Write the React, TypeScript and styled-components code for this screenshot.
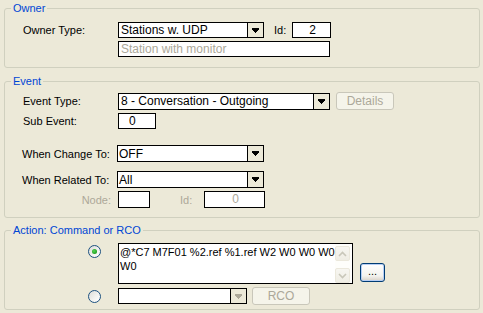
import styled, { createGlobalStyle } from 'styled-components';

const GlobalStyle = createGlobalStyle`
  html, body {
    margin: 0;
    padding: 0;
    background: #ece9d8;
  }
  body {
    font-family: "Liberation Sans", Arial, sans-serif;
    font-size: 11px;
    color: #000000;
  }
`;

function ArrowGlyph({ color }: { color: string }) {
  return (
    <svg width="7" height="5" viewBox="0 0 7 5" shapeRendering="crispEdges">
      <rect x="0" y="0" width="7" height="1" fill={color} />
      <rect x="0" y="1" width="7" height="1" fill={color} />
      <rect x="1" y="2" width="5" height="1" fill={color} />
      <rect x="2" y="3" width="3" height="1" fill={color} />
      <rect x="3" y="4" width="1" height="1" fill={color} />
    </svg>
  );
}

function Chevron({ up }: { up?: boolean }) {
  return (
    <svg width="9" height="6" viewBox="0 0 9 6">
      <polyline
        points={up ? '1,5 4.5,1.5 8,5' : '1,1 4.5,4.5 8,1'}
        fill="none"
        stroke="#c9c7ba"
        strokeWidth="1.6"
      />
    </svg>
  );
}

function Combo({
  value,
  width,
  height = 17,
  disabled,
  pad = 2,
}: {
  value: string;
  width: number;
  height?: number;
  disabled?: boolean;
  pad?: number;
}) {
  return (
    <ComboBox $width={width} $height={height}>
      <ComboText $pad={pad}>{value}</ComboText>
      <ComboArrow>
        <ArrowGlyph color={disabled ? '#aca899' : '#000000'} />
      </ComboArrow>
    </ComboBox>
  );
}

export default function App() {
  return (
    <>
      <GlobalStyle />
      <Page>
        <Group $top={0} $padTop={7} $padBottom={10}>
          <Legend>Owner</Legend>
          <Row>
            <Label>Owner Type:</Label>
            <Combo value="Stations w. UDP" width={146} height={16} />
            <SmallLabel $left={10} $width={18}>
              Id:
            </SmallLabel>
            <Edit $width={39} $align="center">
              2
            </Edit>
          </Row>
          <Row $top={3}>
            <Label />
            <Edit $width={212} $muted>
              Station with monitor
            </Edit>
          </Row>
        </Group>

        <Group $top={7} $padTop={4} $padBottom={9}>
          <Legend>Event</Legend>
          <Row>
            <Label>Event Type:</Label>
            <Combo value="8 - Conversation - Outgoing" width={212} />
            <FlatButton $left={6} $width={58}>
              Details
            </FlatButton>
          </Row>
          <Row $top={3}>
            <Label>Sub Event:</Label>
            <Edit $width={38} $indent={10}>
              0
            </Edit>
          </Row>
          <Row $top={16}>
            <Label $shift={-1}>When Change To:</Label>
            <Combo value="OFF" width={147} pad={1} />
          </Row>
          <Row $top={9}>
            <Label $shift={-1}>When Related To:</Label>
            <Combo value="All" width={147} pad={1} />
          </Row>
          <Row $top={3}>
            <Label $muted $right>
              Node:
            </Label>
            <Edit $width={32} $height={17} />
            <SmallLabel $left={30} $width={24} $muted>
              Id:
            </SmallLabel>
            <Edit $width={61} $height={17} $align="center" $muted>
              0
            </Edit>
          </Row>
        </Group>

        <Group $top={6} $padTop={6} $padBottom={4}>
          <Legend>Action: Command or RCO</Legend>
          <ActionRow>
            <Radio $checked />
            <TextArea>
              <TextLines>
                <div>@*C7 M7F01 %2.ref %1.ref W2 W0 W0 W0</div>
                <div>W0</div>
              </TextLines>
              <ScrollBar>
                <ScrollButton>
                  <Chevron up />
                </ScrollButton>
                <ScrollButton>
                  <Chevron />
                </ScrollButton>
              </ScrollBar>
            </TextArea>
            <DotsButton>...</DotsButton>
          </ActionRow>
          <ActionRow $top={3} $center>
            <Radio />
            <Combo value="" width={129} height={16} disabled />
            <FlatButton $left={5} $width={58}>
              RCO
            </FlatButton>
          </ActionRow>
        </Group>
      </Page>
    </>
  );
}

const Page = styled.div`
  width: 483px;
  height: 313px;
  box-sizing: border-box;
  padding: 2px 3px 0 4px;
  overflow: hidden;
`;

const Group = styled.fieldset<{ $top: number; $padTop: number; $padBottom: number }>`
  margin: ${(p) => p.$top}px 0 0 0;
  padding: ${(p) => p.$padTop}px 0 ${(p) => p.$padBottom}px 0;
  width: 476px;
  box-sizing: border-box;
  border: 1px solid #d0d0bf;
  border-radius: 3px;
  min-inline-size: 0;
`;

const Legend = styled.legend`
  margin-left: 6px;
  padding: 0 2px;
  color: #0046d5;
  font-size: 11px;
  line-height: 13px;
`;

const Row = styled.div<{ $top?: number }>`
  display: flex;
  align-items: center;
  margin-top: ${(p) => p.$top ?? 0}px;
  padding-left: 18px;
`;

const ActionRow = styled.div<{ $top?: number; $center?: boolean }>`
  display: flex;
  align-items: ${(p) => (p.$center ? 'center' : 'flex-start')};
  margin-top: ${(p) => p.$top ?? 0}px;
  padding-left: 83px;
`;

const Label = styled.div<{ $muted?: boolean; $right?: boolean; $shift?: number }>`
  width: 95px;
  flex-shrink: 0;
  box-sizing: border-box;
  margin-left: ${(p) => p.$shift ?? 0}px;
  padding-right: ${(p) => (p.$right ? 7 : 0)}px;
  text-align: ${(p) => (p.$right ? 'right' : 'left')};
  color: ${(p) => (p.$muted ? '#aca899' : '#000000')};
  white-space: nowrap;
`;

const SmallLabel = styled.div<{ $left: number; $width: number; $muted?: boolean }>`
  margin-left: ${(p) => p.$left}px;
  width: ${(p) => p.$width}px;
  color: ${(p) => (p.$muted ? '#aca899' : '#000000')};
`;

const ComboBox = styled.div<{ $width: number; $height: number }>`
  display: flex;
  width: ${(p) => p.$width}px;
  height: ${(p) => p.$height}px;
  box-sizing: border-box;
  border: 1px solid #000000;
  background: #ffffff;
`;

const ComboText = styled.div<{ $pad: number }>`
  flex: 1;
  padding-left: ${(p) => p.$pad}px;
  display: flex;
  align-items: center;
  white-space: nowrap;
  overflow: hidden;
  font-size: 12px;
`;

const ComboArrow = styled.div`
  width: 15px;
  border-left: 1px solid #000000;
  background: #ece9d8;
  display: flex;
  align-items: center;
  justify-content: center;
`;

const Edit = styled.div<{
  $width: number;
  $height?: number;
  $align?: string;
  $muted?: boolean;
  $indent?: number;
}>`
  width: ${(p) => p.$width}px;
  height: ${(p) => p.$height ?? 16}px;
  box-sizing: border-box;
  border: 1px solid #000000;
  background: #ffffff;
  padding-left: ${(p) => p.$indent ?? 2}px;
  text-align: ${(p) => p.$align ?? 'left'};
  line-height: 14px;
  font-size: 12px;
  color: ${(p) => (p.$muted ? '#aca899' : '#000000')};
  white-space: nowrap;
`;

const FlatButton = styled.div<{ $left: number; $width: number }>`
  margin-left: ${(p) => p.$left}px;
  width: ${(p) => p.$width}px;
  height: 18px;
  box-sizing: border-box;
  border: 1px solid #c9c7ba;
  border-radius: 3px;
  background: #f5f4ea;
  color: #aca899;
  display: flex;
  align-items: center;
  justify-content: center;
  font-size: 12px;
`;

const Radio = styled.div<{ $checked?: boolean }>`
  width: 13px;
  height: 13px;
  box-sizing: border-box;
  margin-top: ${(p) => (p.$checked ? 2 : 0)}px;
  margin-right: 17px;
  border-radius: 50%;
  border: 1px solid #1c5180;
  background: linear-gradient(135deg, #dcdcd7 0%, #f4f4f1 60%, #ffffff 100%);
  display: flex;
  align-items: center;
  justify-content: center;
  flex-shrink: 0;

  &::after {
    content: '';
    display: ${(p) => (p.$checked ? 'block' : 'none')};
    width: 5px;
    height: 5px;
    border-radius: 50%;
    background: radial-gradient(circle at 40% 40%, #55d455 0%, #21a121 70%);
  }
`;

const TextArea = styled.div`
  display: flex;
  width: 235px;
  height: 41px;
  box-sizing: border-box;
  border: 1px solid #000000;
  background: #ffffff;
`;

const TextLines = styled.div`
  flex: 1;
  padding: 1px 0 0 1px;
  font-size: 11px;
  line-height: 14px;
  white-space: nowrap;
  overflow: hidden;
`;

const ScrollBar = styled.div`
  width: 16px;
  margin-right: 1px;
  padding-top: 2px;
  display: flex;
  flex-direction: column;
  justify-content: space-between;
  background: #fefefb;
`;

const ScrollButton = styled.div`
  width: 15px;
  height: 15px;
  box-sizing: border-box;
  border: 1px solid #ebe8dc;
  border-radius: 2px;
  background: linear-gradient(180deg, #f7f6f1 0%, #efede4 100%);
  display: flex;
  align-items: center;
  justify-content: center;
`;

const DotsButton = styled.div`
  margin: 20px 0 0 7px;
  width: 25px;
  height: 19px;
  box-sizing: border-box;
  border: 1px solid #003c74;
  border-radius: 3px;
  background: linear-gradient(180deg, #ffffff 0%, #f3f2ee 70%, #d6d0c5 100%);
  box-shadow: inset 0 0 0 1px #b6cef4;
  display: flex;
  align-items: center;
  justify-content: center;
  font-size: 11px;
  line-height: 10px;
  padding-bottom: 3px;
`;
